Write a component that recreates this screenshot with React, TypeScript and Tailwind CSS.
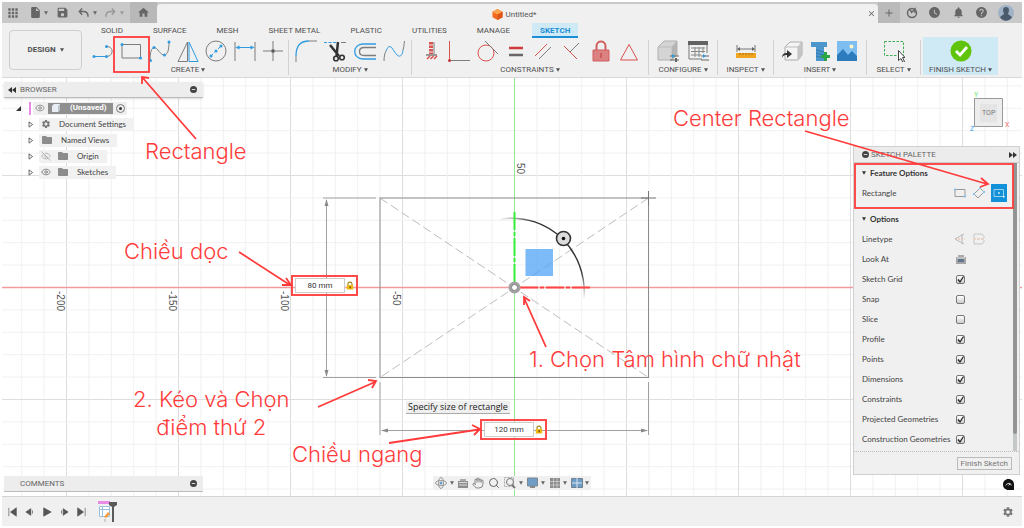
import React from 'react';
import {
  MdApps,
  MdInsertDriveFile,
  MdSave,
  MdHome,
  MdClose,
  MdAdd,
  MdWatchLater,
  MdNotifications,
  MdHelp,
  MdSettings,
  MdFolder,
} from 'react-icons/md';
import { Eye, EyeOff, Hand, Search } from 'lucide-react';

const GRAY = '#7d7d7d';
const BLUE = '#2f9be0';
const RED = '#d9534f';
const MARK = '#ff3b3b';

const Caret = ({ className = '' }: { className?: string }) => (
  <svg viewBox="0 0 6 5" className={`h-[4px] w-[4px] shrink-0 ${className}`} fill="currentColor">
    <path d="M0 0h6L3 5z" />
  </svg>
);

const Dot = ({ x, y }: { x: number; y: number }) => (
  <circle cx={x} cy={y} r="1.5" fill={BLUE} stroke="none" />
);

/* ---------- ribbon data ---------- */

type Tool = { name: string; art: React.ReactNode };
type Group = { label: string; box: string; tools: Tool[] };

const createTools: Tool[] = [
  {
    name: 'Line',
    art: (
      <>
        <path d="M2 16.5h12c8 0 8-10 1-10" />
        <path d="M2 16.5h12" stroke={BLUE} />
        <Dot x={2} y={16.5} />
        <Dot x={14.5} y={16.5} />
        <Dot x={14.5} y={6.5} />
      </>
    ),
  },
  {
    name: 'Rectangle',
    art: (
      <>
        <path d="M2 4.500h18.500v13.500H2z" />
        <Dot x={2} y={4.5} />
        <Dot x={20.5} y={18} />
      </>
    ),
  },
  {
    name: 'Spline',
    art: (
      <>
        <path d="M1 20.500C1 12 2.500 8 5 7.500c4 0 6 8 10.500 7.500C19 14.500 20 9 20 2" />
        <Dot x={1.5} y={20.5} />
        <Dot x={5} y={7.5} />
        <Dot x={15.5} y={15} />
        <Dot x={20} y={2} />
      </>
    ),
  },
  {
    name: 'Mirror',
    art: (
      <>
        <path d="M10.500 2v19.500H1z" />
        <path d="M12 2v19.500h9z" stroke={BLUE} />
      </>
    ),
  },
  {
    name: 'Circle',
    art: (
      <>
        <circle cx="11" cy="11" r="10" />
        <path d="M6 16L16 6" stroke={BLUE} strokeDasharray="3 2" />
        <Dot x={6} y={16} />
        <Dot x={11} y={11} />
        <Dot x={16} y={6} />
      </>
    ),
  },
  {
    name: 'Dimension',
    art: (
      <>
        <path d="M1 2v19M21 2v19" />
        <path d="M3 7.500h16" stroke={BLUE} />
        <path d="M1.500 7.500l4-2v4zM20.500 7.500l-4-2v4z" fill={BLUE} stroke="none" />
      </>
    ),
  },
  {
    name: 'Point',
    art: (
      <>
        <path d="M11 1v20M1 11h20" />
        <path d="M9.500 9.500h3v3h-3z" fill="#555" stroke="none" />
      </>
    ),
  },
];

const modifyTools: Tool[] = [
  {
    name: 'Fillet',
    art: (
      <>
        <path d="M14 1h8M1 16v6" />
        <path d="M1 16C1 6 5 1 14 1" stroke={BLUE} strokeWidth="1.300" />
      </>
    ),
  },
  {
    name: 'Trim',
    art: (
      <>
        <path d="M0 2.500h13" stroke={BLUE} strokeDasharray="3 1.500" />
        <path d="M17 2.500h5" />
        <path d="M6 5l9 11M14 2l-1.500 14" stroke="#333" strokeWidth="2.500" />
        <circle cx="12" cy="18.500" r="2.300" stroke="#333" strokeWidth="1.600" />
        <circle cx="18" cy="17.500" r="2.300" stroke="#333" strokeWidth="1.600" />
      </>
    ),
  },
  {
    name: 'Offset',
    art: (
      <>
        <path d="M22 4H9C-2 4-2 19 9 19h13" stroke={BLUE} strokeWidth="1.300" />
        <path d="M22 7.500H10c-6 0-6 8 0 8h12" strokeWidth="1.300" />
      </>
    ),
  },
  {
    name: 'Extend',
    art: (
      <>
        <path d="M1 21c0-5 1-8 2-10M20 10c1-3 1-6 1.500-9" />
        <path d="M3 11c3-7 5-5 8 0 4 7 8 7 9-1" stroke={BLUE} />
      </>
    ),
  },
];

const constraintTools: Tool[] = [
  {
    name: 'Fix',
    art: (
      <>
        <path d="M11 2v12" stroke={RED} strokeWidth="4" strokeDasharray="2.500 1" />
        <path d="M14 2v12" />
        <path d="M6 15h11" strokeWidth="1.500" />
        <path d="M7 19l3-3M10.500 19l3-3M14 19l3-3" stroke={RED} strokeWidth="1.500" />
      </>
    ),
  },
  {
    name: 'Perpendicular',
    art: (
      <>
        <path d="M1.500 1v20" stroke={RED} />
        <path d="M1.500 20.500H22" />
        <circle cx="1.5" cy="20.5" r="1.5" fill="#c33" stroke="none" />
      </>
    ),
  },
  {
    name: 'Tangent',
    art: (
      <>
        <circle cx="9" cy="13" r="8" stroke={RED} />
        <path d="M8 1l13 13" />
      </>
    ),
  },
  {
    name: 'Equal',
    art: (
      <>
        <path d="M4 8h14" stroke="#cf3a3a" strokeWidth="2.500" />
        <path d="M4 15h14" stroke="#666" strokeWidth="2.500" />
      </>
    ),
  },
  {
    name: 'Parallel',
    art: (
      <>
        <path d="M2 16L14 4" stroke={RED} />
        <path d="M6 19L18 7" />
      </>
    ),
  },
  {
    name: 'Midpoint',
    art: (
      <>
        <path d="M3 6l13 13" stroke={RED} />
        <path d="M9 12l9-9" />
      </>
    ),
  },
  {
    name: 'Lock',
    art: (
      <>
        <path d="M6.500 10V6c0-6 9-6 9 0v4" stroke="#d06060" strokeWidth="2" />
        <path d="M3 10h16v11H3z" fill="#dd8080" stroke="#d06060" />
        <path d="M11 13v5" stroke="#b23b3b" />
      </>
    ),
  },
  { name: 'Symmetry', art: <path d="M11 4.500l8.500 15.500h-17z" stroke={RED} /> },
];

const configureTools: Tool[] = [
  {
    name: 'Configure model',
    art: (
      <>
        <path d="M1 7l6-6h13v14l-5 5H1z" fill="#d4d4d4" stroke="#b0b0b0" />
        <path d="M1 7h14v13M15 7l5-6" stroke="#bdbdbd" />
        <path d="M15 7l5-6v14l-5 5z" fill="#b4b4b4" stroke="none" />
        <path d="M13 16h9M13 20h9" stroke="#666" />
        <path d="M15 14l3 2-3 2z" fill={BLUE} stroke="none" />
        <path d="M18 18h2v4h-2z" fill="#666" stroke="none" />
      </>
    ),
  },
  {
    name: 'Configuration table',
    art: (
      <>
        <path d="M1 1h20v4H1z" fill="#636363" stroke="none" />
        <path d="M2 5v14h13M20 5v8" stroke="#777" />
        <path d="M4 8h14M4 11.500h14M4 15h10M8 7v10M12 7v10M16 7v6" stroke="#888" />
        <path d="M14 16h8M14 20h8" stroke="#666" />
        <path d="M16 14l3 2-3 2z" fill={BLUE} stroke="none" />
      </>
    ),
  },
];

const inspectTools: Tool[] = [
  {
    name: 'Measure',
    art: (
      <>
        <path d="M2 5v7M20 5v7M3 9h16" stroke="#777" />
        <path d="M2 9l3-2v4zM20 9l-3-2v4z" fill="#666" stroke="none" />
        <path d="M1 13h20v5H1z" fill="#f0a420" stroke="none" />
        <path d="M5 13v2M8 13v2M11 13v2M14 13v2M17 13v2" stroke="#8a5b00" strokeWidth="0.700" />
      </>
    ),
  },
];

const insertTools: Tool[] = [
  {
    name: 'Insert component',
    art: (
      <>
        <path d="M3 7l5-5h12v13l-4 5H3z" fill="#f4f4f4" stroke="#aaa" />
        <path d="M3 7h13v13M16 7l4-5" stroke="#bbb" />
        <path d="M16 7l4-5v13l-4 5z" fill="#c4c4c4" stroke="none" />
        <path d="M0 18c0-4 2-5 5-5v-3l5 4-5 4v-3c-2 0-4 0-5 3z" fill="#333" stroke="none" />
      </>
    ),
  },
  {
    name: 'Insert fastener',
    art: (
      <>
        <path d="M2 2h16v5h-3v14H7V7H2z" fill="#4d97cc" stroke="none" />
        <path d="M7 10l8 2M7 13l8 2M7 16l8 2" stroke="#2d78ad" />
        <path d="M16.500 12v9M12 16.500h9" stroke="#29a745" strokeWidth="3" />
      </>
    ),
  },
  {
    name: 'Insert image',
    art: (
      <>
        <path d="M1 1h20v20H1z" fill="#7dbdf0" stroke="none" />
        <path d="M1 15l6-6 5 6 4-4 5 5v5H1z" fill="#2c7bbd" stroke="none" />
        <circle cx="15.5" cy="6.5" r="2" fill="#fff6c9" stroke="none" />
      </>
    ),
  },
];

const selectTools: Tool[] = [
  {
    name: 'Select',
    art: (
      <>
        <path d="M1.500 1.500h19v14h-19z" stroke="#3fae55" strokeDasharray="2.500 1.500" />
        <path d="M15.500 10.500v10l2.500-2 2 4 1.500-1-2-4h2.500z" fill="#fff" stroke="#444" />
      </>
    ),
  },
];

const groups: Group[] = [
  { label: 'CREATE', box: 'w-[201px] px-1', tools: createTools },
  { label: 'MODIFY', box: 'w-[123px] px-1.5', tools: modifyTools },
  { label: 'CONSTRAINTS', box: 'w-[237px] px-2', tools: constraintTools },
  { label: 'CONFIGURE', box: 'w-[69px] px-2', tools: configureTools },
  { label: 'INSPECT', box: 'w-[56px] px-4', tools: inspectTools },
  { label: 'INSERT', box: 'w-[93px] px-2', tools: insertTools },
  { label: 'SELECT', box: 'w-[54px] px-4', tools: selectTools },
];

const ribbonTabs = ['SOLID', 'SURFACE', 'MESH', 'SHEET METAL', 'PLASTIC', 'UTILITIES', 'MANAGE'];

/* ---------- header ---------- */

const TurnArrow = ({ className = '' }: { className?: string }) => (
  <svg viewBox="0 0 12 12" className={`size-[11px] ${className}`} fill="none" stroke="currentColor" strokeWidth="1.600">
    <path d="M4.500 1.500L1.500 5l3 3.500M1.500 5H6c3 0 5 2 5 5.500" />
  </svg>
);

const TitleBar: React.FC = () => (
  <header className="flex h-[21px] bg-[#c9c9c9] text-[#666]">
    <div className="flex w-32 items-center justify-between pr-1.5 pl-1">
      <button aria-label="Data panel"><MdApps className="size-[14px]" /></button>
      <button aria-label="File" className="flex items-center gap-[2px]"><MdInsertDriveFile className="size-[13px]" /><Caret /></button>
      <button aria-label="Save"><MdSave className="size-[13px]" /></button>
      <button aria-label="Undo" className="flex items-center gap-1"><TurnArrow /><Caret /></button>
      <button aria-label="Redo" className="flex items-center gap-1 text-[#999]"><TurnArrow className="-scale-x-100" /><Caret /></button>
    </div>
    <button aria-label="Home" className="flex w-[27px] items-center justify-center bg-[#b8b8b8]">
      <MdHome className="size-[13px]" />
    </button>
    <div className="mt-0.5 flex flex-1 items-center rounded-t-sm bg-[#f0f0f0] pr-[2px]">
      <div className="flex flex-1 items-center justify-center gap-[3px] pt-[2px] pl-1 text-[8px] text-[#555]">
        <svg viewBox="0 0 12 12" className="size-[11px]">
          <path d="M6 0l5.500 3v6L6 12 .5 9V3z" fill="#f26b21" />
          <path d="M6 0l5.500 3L6 6 .5 3z" fill="#ffa552" />
          <path d="M6 6l5.500-3v6L6 12z" fill="#dd5518" />
        </svg>
        <h1>Untitled*</h1>
      </div>
      <button aria-label="Close tab"><MdClose className="size-[9px]" /></button>
    </div>
    <button aria-label="New tab" className="flex w-[22px] items-center justify-center bg-[#bababa]">
      <MdAdd className="size-3" />
    </button>
    <div className="flex w-[122px] items-center justify-between pr-2 pl-1.5">
      <button aria-label="Extensions">
        <svg viewBox="0 0 12 12" className="size-3" fill="none" stroke="currentColor" strokeWidth="1.500">
          <circle cx="6" cy="6" r="4.500" />
          <path d="M5 6l4-4v4M3 2l3 3" />
        </svg>
      </button>
      <button aria-label="Job status"><MdWatchLater className="size-[13px]" /></button>
      <button aria-label="Notifications"><MdNotifications className="size-[13px]" /></button>
      <button aria-label="Help"><MdHelp className="size-[13px]" /></button>
      <button aria-label="Account">
        <svg viewBox="0 0 16 16" className="size-4">
          <circle cx="8" cy="8" r="8" fill="#9fb2c6" />
          <path d="M5 5c0-4 6-4 6 0 0 2-1 3-1 4l4 3c-3 5-9 5-12 0l4-3C6 8 5 7 5 5z" fill="#4c5b6c" />
        </svg>
      </button>
    </div>
  </header>
);

const RibbonGroup: React.FC<Group> = ({ label, box, tools }) => (
  <div className={`flex flex-col border-r border-[#d2d2d2] ${box}`}>
    <div className={`flex h-[25px] items-start ${tools.length > 1 ? 'justify-between' : 'justify-center'}`}>
      {tools.map((tool) => (
        <button key={tool.name} aria-label={tool.name} className="shrink-0">
          <svg viewBox="0 0 22 22" className="size-[22px]" fill="none" stroke={GRAY}>
            {tool.art}
          </svg>
        </button>
      ))}
    </div>
    <button className="flex items-center justify-center gap-[2px] self-center leading-[10px] whitespace-nowrap">
      {label}
      <Caret />
    </button>
  </div>
);

const Ribbon: React.FC = () => (
  <div className="flex h-[55px] border-b border-[#d8d8d8] bg-[#f0f0f0] text-[8px] text-[#505050]">
    <button className="mt-[7px] ml-[7px] flex h-10 w-[73px] items-center justify-center gap-1 rounded-sm border border-[#cfcfcf] font-bold">
      DESIGN
      <Caret />
    </button>
    <div className="ml-1.5 flex flex-1 flex-col">
      <nav className="flex h-[15px] items-stretch gap-[30px] pl-[13px] leading-[15px] whitespace-nowrap">
        {ribbonTabs.map((tab) => (
          <button key={tab}>{tab}</button>
        ))}
        <button className="-ml-2 border-b-2 border-[#1a8fd8] bg-[#cfe9f5] px-2 font-bold text-[#1a8fd8]">SKETCH</button>
      </nav>
      <div className="mt-[2px] flex">
        {groups.map((group) => (
          <RibbonGroup key={group.label} {...group} />
        ))}
        <button className="-mt-[3px] ml-[2px] flex w-[75px] flex-col items-center bg-[#cfe9f5] pt-[3px]">
          <svg viewBox="0 0 22 22" className="mb-[3px] size-[22px]">
            <circle cx="11" cy="11" r="10.500" fill="#5fc40a" />
            <path d="M6 11l4 4 7-8" fill="none" stroke="#fff" strokeWidth="2.800" />
          </svg>
          <span className="flex items-center gap-[2px] leading-[10px] whitespace-nowrap">
            FINISH SKETCH
            <Caret />
          </span>
        </button>
      </div>
    </div>
  </div>
);

/* ---------- sketch canvas ---------- */

const CX = 514.5;
const CY = 287.5;
const STEP = 22.4;

const SketchCanvas: React.FC = () => {
  const lines = Array.from({ length: 121 }, (_, i) => i - 60);
  return (
    <svg
      className="absolute inset-0 h-full w-full [clip-path:inset(2px)]"
      fill="none"
      fontFamily="'Liberation Sans', sans-serif"
    >
      <defs>
        <linearGradient id="arcFade" x1="498" y1="220" x2="588" y2="310" gradientUnits="userSpaceOnUse">
          <stop offset="0" stopColor="#333" stopOpacity="0" />
          <stop offset="0.200" stopColor="#333" />
          <stop offset="0.750" stopColor="#333" />
          <stop offset="0.920" stopColor="#333" stopOpacity="0" />
        </linearGradient>
      </defs>
      {lines.map((i) => (
        <g key={i} stroke={i % 5 === 0 ? '#dedede' : '#f1f1f1'}>
          <line x1={CX + i * STEP} x2={CX + i * STEP} y1="0" y2="100%" />
          <line x1="0" x2="100%" y1={CY + i * STEP} y2={CY + i * STEP} />
        </g>
      ))}
      <line x1="0" x2="100%" y1={CY} y2={CY} stroke="#f59a9a" strokeWidth="1.300" />
      <line x1={CX} x2={CX} y1="0" y2="100%" stroke="#93e893" />

      <g fontSize="10" fill="#555">
        <text transform="translate(57 291) rotate(90)">-200</text>
        <text transform="translate(169 291) rotate(90)">-150</text>
        <text transform="translate(281 291) rotate(90)">-100</text>
        <text transform="translate(393 291) rotate(90)">-50</text>
        <text transform="translate(517 163) rotate(90)">50</text>
      </g>

      {/* rectangle with construction diagonals */}
      <path d="M380 198L648.500 377.500M648.500 198L380 377.500" stroke="#bdbdbd" strokeDasharray="9 4" />
      <rect x="380" y="198" width="268.500" height="179.500" stroke="#8c8c8c" />
      <path d="M641 198h15M648.500 191v14" stroke="#777" />

      {/* dimension lines */}
      <g stroke="#a0a0a0">
        <path d="M323 198h53M323 377.500h53M326.500 200v176" />
        <path d="M380 382v53M648.500 382v53M382 430.500h265" />
      </g>
      <g fill="#8a8a8a">
        <path d="M326.500 199l2 7h-4zM326.500 377l2-7h-4z" />
        <path d="M381 430.500l7-2v4zM648 430.500l-7-2v4z" />
      </g>

      {/* manipulator */}
      <rect x="525.500" y="249" width="27.500" height="27" fill="#4a9ff5" fillOpacity="0.720" />
      <path d="M500 219C550 212 588 252 584 299" stroke="url(#arcFade)" strokeWidth="1.400" />
      <circle cx="563.500" cy="238.500" r="7" fill="#dcdcdc" stroke="#333" strokeWidth="1.600" />
      <circle cx="563.500" cy="238.500" r="1.800" fill="#111" />
      <path d="M514.500 212v72" stroke="#35ee35" strokeWidth="2" strokeDasharray="18 2 4 2" />
      <path d="M520 287.500h70" stroke="#f44" strokeWidth="2" strokeDasharray="18 2 4 2" />
      <circle cx="514.500" cy="287.500" r="4.500" stroke="#a2a2a2" strokeWidth="3" fill="#eee" />
      <circle cx="514.500" cy="287.500" r="3" stroke="#666" fill="#fff" strokeWidth="0.800" />
    </svg>
  );
};

const LockIcon = () => (
  <svg viewBox="0 0 10 10" className="h-[9px] w-2">
    <path d="M2.500 5V3c0-3 5-3 5 0v2" fill="none" stroke="#a78315" strokeWidth="1.400" />
    <path d="M1 4.500h8V10H1z" fill="#f2b90f" />
    <path d="M4.500 6h1.400v2.500H4.500z" fill="#4a3500" />
  </svg>
);

const DimensionInput: React.FC<{ label: string; value: string; place: string }> = ({ label, value, place }) => (
  <div className={`absolute flex h-[21px] w-[67px] items-center justify-between border-2 border-[#ff4a4a] px-[2px] ${place}`}>
    <input
      aria-label={label}
      defaultValue={value}
      className="h-[15px] w-[50px] border border-[#ccc] bg-white text-center text-[8px] text-[#333]"
    />
    <LockIcon />
  </div>
);

const Annotations: React.FC = () => (
  <div className="pointer-events-none absolute inset-0">
    <svg className="absolute inset-0 h-full w-full" fill="none" stroke={MARK} strokeWidth="1.800">
      <rect x="114" y="37" width="35" height="35" />
      <rect x="855" y="164" width="158" height="44" />
      <path d="M196 139L142 77M142 84v-7l7 1" />
      <path d="M805 131L987 184M981 178l7 6-8 3" />
      <path d="M239 252L290 285M286 278l5 7-9 0" />
      <path d="M318 407L375 382M368 380l8 1-4 7" />
      <path d="M389 443L479 429.500M472 425l8 4-6 6" />
      <path d="M546 347L524 298M524 305l0-8 6 4" />
    </svg>
    <div className="text-[22px] leading-7 font-light whitespace-nowrap text-[#ff3b3b]">
      <p className="absolute top-[137px] left-[145px]">Rectangle</p>
      <p className="absolute top-[104px] left-[673px]">Center Rectangle</p>
      <p className="absolute top-[237px] left-[124px]">Chiều dọc</p>
      <p className="absolute top-[385px] left-[133px] text-center">
        2. Kéo và Chọn
        <br />
        điểm thứ 2
      </p>
      <p className="absolute top-[440px] left-[292px]">Chiều ngang</p>
      <p className="absolute top-[345px] left-[529px]">1. Chọn Tâm hình chữ nhật</p>
    </div>
  </div>
);

/* ---------- browser tree ---------- */

const Expander = () => (
  <svg viewBox="0 0 6 8" className="h-[7px] w-[6px] shrink-0" fill="#fff" stroke="#555">
    <path d="M.8 1l4 3-4 3z" />
  </svg>
);

const PanelDot = () => (
  <svg viewBox="0 0 8 8" className="size-[7px] shrink-0">
    <circle cx="4" cy="4" r="4" fill="#444" />
    <path d="M2 4h4" stroke="#eee" />
  </svg>
);

const nodes = [
  { name: 'Document Settings', eye: '', folder: false },
  { name: 'Named Views', eye: '', folder: true },
  { name: 'Origin', eye: 'off', folder: true },
  { name: 'Sketches', eye: 'on', folder: true },
];

const BrowserPanel: React.FC = () => (
  <section className="text-[8px] text-[#444]">
    <h2 className="flex h-4 items-center border-b border-[#bbb] bg-[#ededed] pr-1.5 pl-1 text-[#666] shadow-sm">
      <svg viewBox="0 0 8 6" className="mr-1 h-[6px] w-2" fill="#333">
        <path d="M4 0v6L0 3zM8 0v6L4 3z" />
      </svg>
      <span className="flex-1">BROWSER</span>
      <PanelDot />
    </h2>
    <ul className="mt-[2px]">
      <li className="flex h-4 items-center pl-3">
        <svg viewBox="0 0 6 6" className="mr-2 size-[5px]" fill="#333">
          <path d="M6 0v6H0z" />
        </svg>
        <span className="mr-0.5 h-[13px] w-[2px] bg-[#e78be7]" />
        <span className="flex h-[13px] items-center gap-[3px] bg-[#efefef] px-[2px]">
          <Eye className="size-[10px] text-[#888]" />
          <button className="flex h-[11px] w-[65px] items-center gap-2.5 bg-[#8f8f8f] pl-1 font-bold text-white">
            <svg viewBox="0 0 8 8" className="size-2">
              <path d="M0 2l2-2h6v6L6 8H0z" fill="#e8eef4" />
              <path d="M6 8V2l2-2v6z" fill="#bcc6d0" />
            </svg>
            (Unsaved)
          </button>
          <input
            type="radio"
            name="active"
            aria-label="Active component"
            defaultChecked
            className="size-[9px] appearance-none rounded-full border border-[#777] bg-[#333] bg-clip-content p-[2px]"
          />
        </span>
      </li>
      {nodes.map((node) => (
        <li key={node.name} className="flex h-4 items-center pl-6">
          <Expander />
          <span className="ml-[5px] flex h-[13px] items-center bg-[#f1f1f1] pr-2 pl-0.5">
            {node.eye === 'on' && <Eye className="mr-1.5 size-[10px] text-[#777]" />}
            {node.eye === 'off' && <EyeOff className="mr-1.5 size-[10px] text-[#aaa]" />}
            {node.folder ? (
              <MdFolder className="size-3 text-[#8c8c8c]" />
            ) : (
              <MdSettings className="size-[10px] text-[#777]" />
            )}
            <span className="pl-2 font-[Lato,Arial,sans-serif]">{node.name}</span>
          </span>
        </li>
      ))}
    </ul>
  </section>
);

/* ---------- sketch palette ---------- */

const options = [
  { name: 'Sketch Grid', on: true },
  { name: 'Snap', on: false },
  { name: 'Slice', on: false },
  { name: 'Profile', on: true },
  { name: 'Points', on: true },
  { name: 'Dimensions', on: true },
  { name: 'Constraints', on: true },
  { name: 'Projected Geometries', on: true },
  { name: 'Construction Geometries', on: true },
];

const OptionRow: React.FC<{ name: string; on: boolean }> = ({ name, on }) => (
  <label className="flex h-5 items-center">
    <span className="w-[94px] whitespace-nowrap">{name}</span>
    <span className="grid">
      <input
        type="checkbox"
        defaultChecked={on}
        className="peer size-[9px] appearance-none rounded-[2px] border border-[#777] bg-linear-to-b from-white to-[#ccc] [grid-area:1/1]"
      />
      <svg viewBox="0 0 9 9" className="pointer-events-none invisible size-[9px] [grid-area:1/1] peer-checked:visible" fill="none" stroke="#222" strokeWidth="1.300">
        <path d="M2 4.500l2 2.500 3.500-5.500" />
      </svg>
    </span>
  </label>
);

const SketchPalette: React.FC = () => (
  <section className="w-[167px] border border-[#d0d0d0] bg-[#f0f0f0] text-[8px] text-[#444]">
    <h2 className="flex h-4 items-center gap-[2px] border-b border-[#ccc] bg-[#ececec] pr-[2px] pl-2 text-[#666]">
      <PanelDot />
      <span className="flex-1">SKETCH PALETTE</span>
      <svg viewBox="0 0 8 6" className="h-[6px] w-2" fill="#333">
        <path d="M0 0v6l4-3zM4 0v6l4-3z" />
      </svg>
    </h2>
    <div className="flex font-[Lato,Arial,sans-serif]">
      <div className="flex-1 pb-[2px]">
        <div className="mr-1.5 border-b border-[#ccc] pb-1 pl-2">
          <h3 className="flex h-5 items-center gap-1 font-bold text-[#333]"><Caret />Feature Options</h3>
          <div className="flex h-5 items-center">
            <span className="w-[92px]">Rectangle</span>
            <div className="flex items-center gap-[7px]">
              <button aria-label="2-point rectangle">
                <svg viewBox="0 0 12 12" className="size-3" fill="none" stroke="#999">
                  <path d="M1 2.500h10v7H1z" />
                  <path d="M0 1.500h2v2H0zM10 8.500h2v2h-2z" fill="#8cc4ee" stroke="none" />
                </svg>
              </button>
              <button aria-label="3-point rectangle">
                <svg viewBox="0 0 12 12" className="size-3" fill="none" stroke="#999">
                  <path d="M1 7l6-6 4 4-6 6z" />
                  <path d="M0 6h2v2H0zM6 0h2v2H6zM10 4h2v2h-2z" fill="#8cc4ee" stroke="none" />
                </svg>
              </button>
              <button aria-label="Center rectangle" className="-ml-px flex h-[18px] w-4 items-center justify-center bg-[#1290d8]">
                <svg viewBox="0 0 12 12" className="size-3" fill="none" stroke="#bfe2f7">
                  <path d="M1 2.500h9.500v7H1z" strokeWidth="0.800" />
                  <path d="M5.200 5.200h1.500v1.500H5.200zM10 9h1.500v1.500H10z" fill="#fff" stroke="none" />
                </svg>
              </button>
            </div>
          </div>
        </div>
        <div className="pt-px pl-2">
          <h3 className="flex h-5 items-center gap-1 font-bold text-[#333]"><Caret />Options</h3>
          <div className="flex h-5 items-center">
            <span className="w-[92px]">Linetype</span>
            <div className="flex items-center gap-[7px]">
              <button aria-label="Construction">
                <svg viewBox="0 0 12 12" className="size-3" fill="none" stroke="#b9b9b9">
                  <path d="M10 1L1 6l9 5M8 1v10" />
                  <path d="M1 6h10" stroke="#e3b9a5" strokeDasharray="2 1" />
                </svg>
              </button>
              <button aria-label="Centerline">
                <svg viewBox="0 0 12 12" className="size-3" fill="none" stroke="#c6c6c6">
                  <path d="M1 5V1h8l2 2v2M1 7v4h8l2-2V7" />
                  <path d="M0 6h12" stroke="#e3b9a5" strokeDasharray="3 1" />
                </svg>
              </button>
            </div>
          </div>
          <div className="flex h-5 items-center">
            <span className="w-[94px]">Look At</span>
            <button aria-label="Look At">
              <svg viewBox="0 0 10 10" className="size-[10px]">
                <path d="M0 3h10v7H0z" fill="#a5a5a5" />
                <path d="M2 1h6v2H2z" fill="#aaa" />
                <path d="M2 5h6v3H2z" fill="#5f748e" />
                <path d="M1 4h8" stroke="#ddd" />
              </svg>
            </button>
          </div>
          {options.map((option) => (
            <OptionRow key={option.name} {...option} />
          ))}
        </div>
      </div>
      <div className="mr-[2px] w-1 bg-[#c4c8c8]">
        <div className="h-[94%] rounded-b-sm bg-[#929494]" />
      </div>
    </div>
    <div className="flex h-[23px] items-center justify-end border-t border-dotted border-[#bbb] pr-[7px]">
      <button className="h-[13px] border border-[#bbb] px-[3px] text-[8px] leading-[11px] text-[#777]">Finish Sketch</button>
    </div>
  </section>
);

/* ---------- bottom bars ---------- */

const NavBar: React.FC = () => (
  <nav className="flex h-[14px] items-center gap-1 bg-[#f0f0f0] px-[2px] text-[#666]">
    <button aria-label="Orbit" className="flex items-center gap-[3px]">
      <svg viewBox="0 0 12 12" className="size-3" fill="none" stroke="#888" strokeWidth="0.800">
        <ellipse cx="6" cy="6" rx="5.500" ry="2.500" />
        <ellipse cx="6" cy="6" rx="2.500" ry="5.500" />
        <circle cx="6" cy="6" r="1.500" fill="#6a9bc4" stroke="none" />
      </svg>
      <Caret />
    </button>
    <button aria-label="Look At">
      <svg viewBox="0 0 10 10" className="size-[10px]">
        <path d="M0 3h10v7H0z" fill="#8d8d8d" />
        <path d="M2 1h6v2H2z" fill="#aaa" />
        <path d="M1 4.500h8M1 7h8" stroke="#ddd" />
      </svg>
    </button>
    <button aria-label="Pan"><Hand className="size-3" strokeWidth={1.5} /></button>
    <button aria-label="Zoom"><Search className="size-3" /></button>
    <button aria-label="Fit" className="flex items-center gap-[3px]">
      <svg viewBox="0 0 12 12" className="size-3" fill="none" stroke="#777">
        <path d="M.5.500h9v9h-9z" stroke="#aaa" strokeDasharray="2 1" />
        <circle cx="6" cy="5" r="3.500" />
        <path d="M8 8l3 3" strokeWidth="2" />
      </svg>
      <Caret />
    </button>
    <button aria-label="Display settings" className="flex items-center gap-[2px]">
      <svg viewBox="0 0 12 12" className="size-3">
        <path d="M.5 1h10v8H.5z" fill="#6f9dc6" stroke="#7b8894" />
        <path d="M3 11h5v-2H3z" fill="#888" />
      </svg>
      <Caret />
    </button>
    <button aria-label="Grid and snaps" className="flex items-center gap-[2px]">
      <svg viewBox="0 0 12 12" className="size-3">
        <path d="M1 1h10v10H1z" fill="#8d8d8d" />
        <path d="M1 4.500h10M1 8h10M4.500 1v10M8 1v10" stroke="#d5d5d5" strokeWidth="0.700" />
      </svg>
      <Caret />
    </button>
    <button aria-label="Viewports" className="flex items-center gap-[2px]">
      <svg viewBox="0 0 12 12" className="size-3">
        <path d="M.5 1.500h11v9H.5z" fill="#6d9cc6" stroke="#71808d" />
        <path d="M6 1v10M1 6h10" stroke="#dce8f2" />
      </svg>
      <Caret />
    </button>
  </nav>
);

const playback = [
  { name: 'Go to start', d: 'M1 1v10M10 1L3 6l7 5z' },
  { name: 'Step back', d: 'M7 2L1 6l6 4zM9 4v4' },
  { name: 'Play', d: 'M2 1l9 5-9 5z' },
  { name: 'Step forward', d: 'M5 2l6 4-6 4zM3 4v4' },
  { name: 'Go to end', d: 'M11 1v10M2 1l7 5-7 5z' },
];

const Timeline: React.FC = () => (
  <footer className="flex h-[30px] items-center border-t border-[#d4d4d4] bg-[#f0f0f0] pr-2 pl-1.5">
    <div className="flex items-center gap-[7px]">
      {playback.map((item) => (
        <button key={item.name} aria-label={item.name}>
          <svg viewBox="0 0 12 12" className="size-[10px]" fill="#555" stroke="#555" strokeWidth="0.800">
            <path d={item.d} />
          </svg>
        </button>
      ))}
    </div>
    <button aria-label="Sketch1" className="ml-3">
      <svg viewBox="0 0 20 24" className="h-6 w-5">
        <path d="M0 1h12v3H0z" fill="#e78be7" />
        <path d="M1.500 6.500h10v10h-10zM4.500 6.500v10M1.500 9.500h10" fill="#fff" stroke="#9cc0dc" />
        <path d="M6 17l4-5 2 2-4 4z" fill="#f39a3c" />
        <path d="M7 19v3" stroke="#aaa" />
        <path d="M11 2h8v3l-3 2v15h-2V7l-3-2z" fill="#5a5a5a" />
      </svg>
    </button>
    <button aria-label="Timeline settings" className="ml-auto">
      <MdSettings className="size-3 text-[#777]" />
    </button>
  </footer>
);

const ViewCube: React.FC = () => (
  <svg viewBox="0 0 42 44" className="h-11 w-[42px]" fontFamily="Roboto, sans-serif" fontSize="7">
    <path d="M6.500 8.500h28v28h-28z" fill="#ededed" stroke="#999" />
    <path d="M12 14h17v18H12z" fill="#e4e4e4" />
    <text x="14" y="25" fill="#777">TOP</text>
    <text x="6" y="7" fill="#6be86b">Y</text>
    <text x="37" y="37" fill="#f26d6d">X</text>
    <text x="2" y="41" fill="#3a9be8">Z</text>
  </svg>
);

export default function App() {
  return (
    <div className="relative flex min-h-screen flex-col bg-white p-[2px] font-[Roboto,Arial,sans-serif]">
      <SketchCanvas />
      <div className="relative">
        <TitleBar />
        <Ribbon />
      </div>
      <main className="relative grid flex-1 grid-cols-[1fr_auto_1fr]">
        <div className="flex w-[201px] flex-col justify-between pt-1 pb-1 pl-[2px]">
          <BrowserPanel />
          <section className="flex h-4 items-center border-b border-[#bbb] bg-[#ededed] pr-1.5 pl-4 text-[8px] text-[#666]">
            <h2 className="flex-1">COMMENTS</h2>
            <PanelDot />
          </section>
        </div>
        <div className="flex items-end pb-1.5">
          <NavBar />
        </div>
        <div className="flex flex-col items-end pt-3 pr-[2px]">
          <div className="mr-2.5"><ViewCube /></div>
          <div className="mt-3"><SketchPalette /></div>
          <button aria-label="Assistant" className="mt-1 mr-1.5">
            <svg viewBox="0 0 12 12" className="size-[11px]">
              <path d="M6 0c3.500 0 6 2.500 6 6v6H6C2.500 12 0 9.500 0 6s2.500-6 6-6z" fill="#111" />
              <path d="M3 7c2-3 5-3 6 0M6 7l2-2" fill="none" stroke="#fff" />
            </svg>
          </button>
        </div>
      </main>
      <div className="relative">
        <Timeline />
      </div>
      <DimensionInput label="Height" value="80 mm" place="top-[275px] left-[291px]" />
      <DimensionInput label="Width" value="120 mm" place="top-[419px] left-[480px]" />
      <p className="absolute top-[401px] left-[406px] border-b border-[#aaa] bg-[#efefef] px-[2px] font-['Open_Sans',sans-serif] text-[9px] leading-3 text-[#222]">
        Specify size of rectangle
      </p>
      <div className="font-[Inter,'Noto_Sans',sans-serif]">
        <Annotations />
      </div>
    </div>
  );
}
